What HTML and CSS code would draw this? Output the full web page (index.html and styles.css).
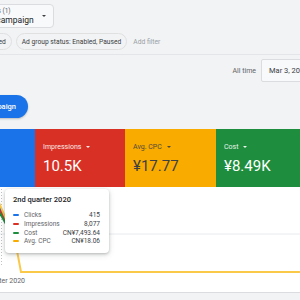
FILE: index.html
```html
<!DOCTYPE html>
<html lang="en">
<head>
  <meta charset="UTF-8">
  <title>Campaigns overview</title>
  <link rel="stylesheet" href="styles.css">
</head>
<body>

  <div class="top">
    <div class="picker">
      <div class="picker-text">
        <span class="picker-sub">Campaigns (1)</span>
        <span class="picker-main">Search campaign</span>
      </div>
      <span class="caret dark"></span>
    </div>
  </div>

  <div class="filters">
    <span class="chip chip-cut">Campaign status: Enabled</span>
    <span class="chip">Ad group status: Enabled, Paused</span>
    <span class="add-filter">Add filter</span>
  </div>

  <div class="divider"></div>

  <div class="daterow">
    <span class="range-label">All time</span>
    <div class="datebox">Mar 3, 2020 – Jun 30, 2020</div>
  </div>

  <div class="actions">
    <button class="new-btn">+ New campaign</button>
  </div>

  <div class="cards">
    <div class="card blue"></div>
    <div class="card red">
      <div class="card-label">Impressions <span class="caret"></span></div>
      <div class="card-value">10.5K</div>
    </div>
    <div class="card orange">
      <div class="card-label">Avg. CPC <span class="caret dark"></span></div>
      <div class="card-value">¥17.77</div>
    </div>
    <div class="card green">
      <div class="card-label">Cost <span class="caret"></span></div>
      <div class="card-value">¥8.49K</div>
    </div>
  </div>

  <div class="chart">
    <svg class="chart-svg" width="300" height="105" viewBox="0 0 300 105">
      <line x1="0" y1="47" x2="300" y2="47" stroke="#e8eaed" stroke-width="1"/>
      <line x1="1.5" y1="2" x2="1.5" y2="80" stroke="#bdc1c6" stroke-width="1" stroke-dasharray="1 2"/>
      <polyline points="-6,8 15,53" fill="none" stroke="#1a73e8" stroke-width="2"/>
      <polyline points="-6,12 15,53" fill="none" stroke="#d93025" stroke-width="2"/>
      <polyline points="-6,16 15,53" fill="none" stroke="#1e8e3e" stroke-width="2"/>
      <polyline points="-6,4 15,53 21,85 300,85" fill="none" stroke="#fbc94a" stroke-width="2"/>
      <text x="25" y="96" text-anchor="end" class="axis-text">1st quarter 2020</text>
    </svg>

    <div class="tooltip">
      <div class="tip-title">2nd quarter 2020</div>
      <div class="tip-row"><span class="swatch s-blue"></span><span class="tip-name">Clicks</span><span class="tip-val">415</span></div>
      <div class="tip-row"><span class="swatch s-red"></span><span class="tip-name">Impressions</span><span class="tip-val">8,077</span></div>
      <div class="tip-row"><span class="swatch s-green"></span><span class="tip-name">Cost</span><span class="tip-val">CN¥7,493.64</span></div>
      <div class="tip-row"><span class="swatch s-orange"></span><span class="tip-name">Avg. CPC</span><span class="tip-val">CN¥18.06</span></div>
    </div>
  </div>

</body>
</html>
```

FILE: styles.css
```css
body {
  margin: 0;
  font-family: Roboto, "Liberation Sans", sans-serif;
  background: #f1f3f4;
  color: #202124;
  overflow: hidden;
}

.top {
  padding-top: 4px;
  height: 24px;
}
.picker {
  box-sizing: border-box;
  display: flex;
  align-items: center;
  justify-content: space-between;
  width: 95px;
  height: 24px;
  margin-left: -41px;
  padding: 0 7px 0 8px;
  border: 1px solid #dadce0;
  border-radius: 4px;
  background: #f8f9fa;
}
.picker-text {
  display: flex;
  flex-direction: column;
  line-height: 8px;
  white-space: nowrap;
}
.picker-sub {
  font-size: 6.5px;
  color: #5f6368;
}
.picker-main {
  font-size: 8.5px;
  color: #202124;
  line-height: 10px;
}

.caret {
  display: inline-block;
  width: 0;
  height: 0;
  border-left: 2.5px solid transparent;
  border-right: 2.5px solid transparent;
  border-top: 2.5px solid #fff;
  vertical-align: middle;
  margin-left: 3px;
}
.caret.dark {
  border-top-color: #3c4043;
}

.filters {
  display: flex;
  align-items: center;
  margin-top: 5px;
  height: 17px;
  gap: 4px;
}
.chip {
  display: flex;
  align-items: center;
  height: 15px;
  padding: 0 5px;
  border: 1px solid #e0e0e0;
  border-radius: 9px;
  font-size: 6.7px;
  color: #3c4043;
  white-space: nowrap;
}
.chip-cut {
  margin-left: -78px;
}
.add-filter {
  margin-left: 2px;
  font-size: 6.7px;
  color: #9aa0a6;
}

.divider {
  margin-top: 4px;
  height: 1px;
  background: #e3e5e8;
}

.daterow {
  display: flex;
  align-items: center;
  justify-content: flex-end;
  margin-top: 4px;
  height: 23px;
  margin-right: -60px;
  gap: 5px;
}
.range-label {
  font-size: 7px;
  color: #5f6368;
}
.datebox {
  display: flex;
  align-items: center;
  height: 21px;
  width: 90px;
  padding-left: 7px;
  border: 1px solid #dadce0;
  border-radius: 2px;
  background: #f8f9fa;
  font-size: 7.5px;
  color: #3c4043;
  white-space: nowrap;
}

.actions {
  margin-top: 13px;
  height: 23px;
}
.new-btn {
  display: flex;
  align-items: center;
  justify-content: flex-end;
  width: 90px;
  height: 23px;
  margin-left: -62px;
  padding: 0 12px 0 0;
  border: none;
  border-radius: 12px;
  background: #1a73e8;
  color: #fff;
  font-family: Roboto, "Liberation Sans", sans-serif;
  font-size: 7.5px;
  font-weight: 500;
  box-shadow: 0 1px 2px rgba(60, 64, 67, 0.3);
}

.cards {
  display: grid;
  grid-template-columns: 91px 90px 91px 91px;
  margin-top: 11px;
  margin-left: -56px;
  height: 58px;
}
.card {
  padding: 13px 8px 0 8px;
  color: #fff;
}
.card-label {
  font-size: 7px;
  height: 10px;
  line-height: 10px;
  opacity: 0.9;
}
.card-value {
  margin-top: 5px;
  font-size: 15px;
  line-height: 18px;
}
.blue { background: #1a73e8; }
.red { background: #d93025; }
.orange { background: #f9ab00; color: #3c4043; }
.green { background: #1e8e3e; }

.chart {
  position: relative;
  height: 105px;
  background: #fff;
  border-bottom: 1px solid #dadce0;
}
.chart-svg {
  display: block;
}
.axis-text {
  font-size: 7px;
  fill: #5f6368;
  font-family: Roboto, "Liberation Sans", sans-serif;
}

.tooltip {
  position: absolute;
  left: 5px;
  top: 2px;
  width: 87px;
  padding: 6px 9px 7.5px 8px;
  background: #fff;
  border-radius: 4px;
  box-shadow: 0 1px 3px rgba(60, 64, 67, 0.3), 0 2px 6px rgba(60, 64, 67, 0.15);
}
.tip-title {
  font-size: 7.5px;
  font-weight: 500;
  color: #202124;
  line-height: 10px;
  margin-bottom: 6px;
}
.tip-row {
  display: flex;
  align-items: center;
  height: 8.7px;
  font-size: 6.5px;
  color: #5f6368;
}
.swatch {
  width: 6px;
  height: 2px;
  border-radius: 1px;
  margin-right: 5px;
}
.s-blue { background: #1a73e8; }
.s-red { background: #d93025; }
.s-green { background: #1e8e3e; }
.s-orange { background: #f9ab00; }
.tip-name {
  flex: 1;
}
.tip-val {
  color: #3c4043;
}
```
